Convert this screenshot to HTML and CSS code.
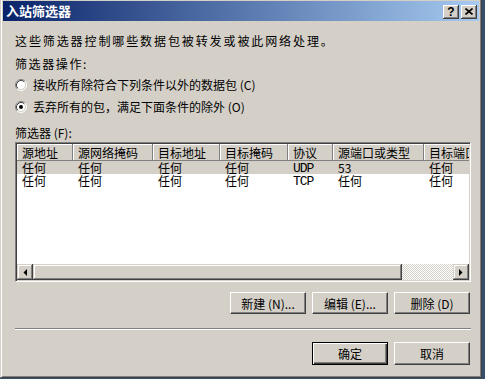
FILE: index.html
```html
<!DOCTYPE html>
<html lang="zh-CN">
<head>
  <meta charset="UTF-8">
  <title>入站筛选器</title>
  <link rel="stylesheet" href="styles.css">
</head>
<body>

<div class="window">
  <!-- Title Bar -->
  <div class="titlebar">
    <span class="title">入站筛选器</span>
    <span class="title-btn help-btn">?</span>
    <span class="title-btn close-btn">
      <svg width="8" height="7" viewBox="0 0 8 7"><path d="M0.5 0.5l7 6M7.5 0.5l-7 6" stroke="#000" stroke-width="1.6"/></svg>
    </span>
  </div>

  <div class="client">
    <p class="intro">这些筛选器控制哪些数据包被转发或被此网络处理。</p>
    <p class="group-label">筛选器操作:</p>

    <!-- Filter Action -->
    <label class="radio-row">
      <svg class="radio" width="12" height="12" viewBox="0 0 12 12">
        <circle cx="6" cy="6" r="5" fill="#fff"/>
        <path d="M2.11 9.89A5.5 5.5 0 0 1 9.89 2.11" fill="none" stroke="#808080"/>
        <path d="M9.89 2.11A5.5 5.5 0 0 1 2.11 9.89" fill="none" stroke="#fff"/>
        <path d="M2.82 9.18A4.5 4.5 0 0 1 9.18 2.82" fill="none" stroke="#404040"/>
        <path d="M9.18 2.82A4.5 4.5 0 0 1 2.82 9.18" fill="none" stroke="#d4d0c8"/>
      </svg>
      <span>接收所有除符合下列条件以外的数据包 (C)</span>
    </label>
    <label class="radio-row second">
      <svg class="radio" width="12" height="12" viewBox="0 0 12 12">
        <circle cx="6" cy="6" r="5" fill="#fff"/>
        <path d="M2.11 9.89A5.5 5.5 0 0 1 9.89 2.11" fill="none" stroke="#808080"/>
        <path d="M9.89 2.11A5.5 5.5 0 0 1 2.11 9.89" fill="none" stroke="#fff"/>
        <path d="M2.82 9.18A4.5 4.5 0 0 1 9.18 2.82" fill="none" stroke="#404040"/>
        <path d="M9.18 2.82A4.5 4.5 0 0 1 2.82 9.18" fill="none" stroke="#d4d0c8"/>
        <circle cx="6" cy="6" r="2" fill="#000"/>
      </svg>
      <span>丢弃所有的包，满足下面条件的除外 (O)</span>
    </label>

    <p class="list-label">筛选器 (F):</p>

    <!-- Filters List -->
    <div class="listbox">
      <div class="list-area">
        <table class="filters">
          <thead>
            <tr>
              <th class="c-src">源地址</th>
              <th class="c-srcmask">源网络掩码</th>
              <th class="c-dst">目标地址</th>
              <th class="c-dstmask">目标掩码</th>
              <th class="c-proto">协议</th>
              <th class="c-srcport">源端口或类型</th>
              <th class="c-dstport">目标端口</th>
            </tr>
          </thead>
          <tbody>
            <tr class="selected">
              <td>任何</td>
              <td>任何</td>
              <td>任何</td>
              <td>任何</td>
              <td class="proto">UDP</td>
              <td>53</td>
              <td>任何</td>
            </tr>
            <tr>
              <td>任何</td>
              <td>任何</td>
              <td>任何</td>
              <td>任何</td>
              <td class="proto">TCP</td>
              <td>任何</td>
              <td>任何</td>
            </tr>
          </tbody>
        </table>
      </div>
      <div class="hscroll">
        <span class="sb-btn">
          <svg width="4" height="7" viewBox="0 0 4 7"><path d="M4 0V7L0.5 3.5Z"/></svg>
        </span>
        <span class="sb-thumb"></span>
        <span class="sb-track"></span>
        <span class="sb-btn">
          <svg width="4" height="7" viewBox="0 0 4 7"><path d="M0 0V7L3.5 3.5Z"/></svg>
        </span>
      </div>
    </div>

    <div class="cmd-row">
      <button class="win-btn">新建 (N)...</button>
      <button class="win-btn">编辑 (E)...</button>
      <button class="win-btn">删除 (D)</button>
    </div>

    <div class="separator"></div>

    <div class="cmd-row dialog-row">
      <button class="win-btn default">确定</button>
      <button class="win-btn">取消</button>
    </div>
  </div>
</div>

</body>
</html>
```

FILE: styles.css
```css
* {
  box-sizing: border-box;
}

html, body {
  margin: 0;
  padding: 0;
}

body {
  background-color: #34506c;
  font-family: "Noto Sans CJK SC", "Liberation Sans", sans-serif;
  font-size: 12px;
  color: #000;
  overflow: hidden;
}

p {
  margin: 0;
}

/* Window Frame */
.window {
  width: 482px;
  height: 380px;
  margin-top: -2px;
  padding: 2px;
  background-color: #d4d0c8;
  border: 1px solid;
  border-color: #d4d0c8 #404040 #404040 #d4d0c8;
  box-shadow: inset 1px 1px #fff, inset -1px -1px #808080;
  display: flex;
  flex-direction: column;
}

.titlebar {
  height: 20px;
  padding: 0 2px 0 3px;
  display: flex;
  align-items: center;
  background: linear-gradient(to right, #0a246a, #a6caf0);
  color: #fff;
  font-weight: bold;
  font-size: 13px;
}

.title {
  flex: 1;
  line-height: 20px;
}

.title-btn {
  width: 16px;
  height: 14px;
  margin-top: 1px;
  display: flex;
  align-items: center;
  justify-content: center;
  background-color: #d4d0c8;
  box-shadow: inset -1px -1px #404040, inset 1px 1px #fff, inset -2px -2px #808080;
}

.help-btn {
  color: #000;
  font-family: "Liberation Sans", sans-serif;
  font-size: 12px;
  line-height: 14px;
}

.close-btn {
  margin-left: 2px;
}

/* Dialog Body */
.client {
  flex: 1;
  padding: 0 8px 0 12px;
  display: flex;
  flex-direction: column;
}

.intro {
  margin-top: 13px;
  line-height: 14px;
  letter-spacing: 1.9px;
}

.group-label {
  margin-top: 9px;
  line-height: 14px;
  letter-spacing: 1.6px;
}

.radio-row {
  height: 14px;
  margin-top: 7px;
  display: flex;
  align-items: center;
  gap: 6px;
  line-height: 14px;
}

.radio-row.second {
  margin-top: 8px;
}

.list-label {
  margin-top: 12px;
  line-height: 14px;
}

/* Filters List */
.listbox {
  height: 140px;
  margin-top: 2px;
  padding: 1px;
  background-color: #fff;
  border: 1px solid;
  border-color: #808080 #fff #fff #808080;
  box-shadow: inset 1px 1px #404040, inset -1px -1px #d4d0c8;
  display: flex;
  flex-direction: column;
}

.list-area {
  flex: 1;
  overflow: hidden;
}

.filters {
  width: 487px;
  table-layout: fixed;
  border-collapse: separate;
  border-spacing: 0;
}

.filters th {
  height: 17px;
  padding: 0 5px;
  font-weight: normal;
  text-align: left;
  line-height: 17px;
  white-space: nowrap;
  overflow: hidden;
  background-color: #d4d0c8;
  box-shadow: inset -1px -1px #808080, inset 1px 1px #fff;
}

.c-src { width: 56px; }
.c-srcmask { width: 80px; }
.c-dst { width: 67px; }
.c-dstmask { width: 68px; }
.c-proto { width: 45px; }
.c-srcport { width: 91px; }
.c-dstport { width: 80px; }

.filters td {
  height: 13px;
  padding: 0 5px;
  line-height: 13px;
  white-space: nowrap;
}

.filters tr.selected td {
  background-color: #d4d0c8;
}

.filters td.proto {
  padding: 3px 5px 0;
  line-height: 10px;
  font-family: "Liberation Mono", monospace;
  font-size: 13px;
  letter-spacing: -1px;
}

.hscroll {
  height: 16px;
  display: flex;
}

.sb-btn, .sb-thumb {
  height: 16px;
  background-color: #d4d0c8;
  box-shadow: inset -1px -1px #404040, inset 1px 1px #d4d0c8, inset -2px -2px #808080, inset 2px 2px #fff;
}

.sb-btn {
  width: 16px;
  display: flex;
  align-items: center;
  justify-content: center;
}

.sb-thumb {
  width: 369px;
}

.sb-track {
  flex: 1;
  background: repeating-conic-gradient(#fff 0 25%, #d4d0c8 0 50%) 0 0 / 2px 2px;
}

/* Buttons */
.cmd-row {
  height: 22px;
  margin-top: 10px;
  margin-right: 1px;
  display: flex;
  justify-content: flex-end;
  gap: 6px;
}

.win-btn {
  width: 76px;
  height: 100%;
  padding: 0;
  font-family: inherit;
  font-size: 12px;
  color: #000;
  background-color: #d4d0c8;
  border: 1px solid;
  border-color: #fff #404040 #404040 #fff;
  box-shadow: inset -1px -1px #808080;
  border-radius: 0;
}

.win-btn.default {
  border-color: #000;
  box-shadow: inset 1px 1px #fff, inset -1px -1px #404040, inset -2px -2px #808080;
}

.separator {
  height: 2px;
  margin-top: 14px;
  border-top: 1px solid #808080;
  border-bottom: 1px solid #fff;
}

.dialog-row {
  height: 23px;
  margin-top: 12px;
}
```
